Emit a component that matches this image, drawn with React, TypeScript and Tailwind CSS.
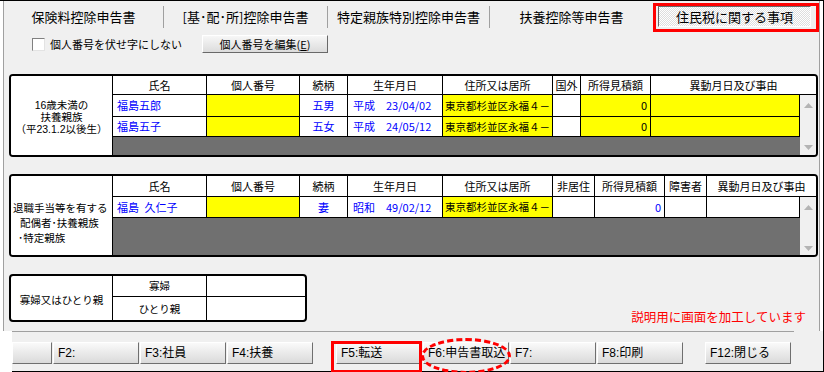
import React from 'react';

type Cell = { t?: React.ReactNode; w: string; bg?: string; cls?: string };

const jp = "font-['Noto_Sans_CJK_JP',sans-serif]";
const btnFont = "font-['Liberation_Sans','Noto_Sans_CJK_JP',sans-serif]";
const blue = 'text-[#0000ff]';

const Up = () => (
  <svg width="9" height="5" viewBox="0 0 9 5">
    <path d="M4.5 0L9 5H0z" fill="#b4b4b4" />
  </svg>
);
const Down = () => (
  <svg width="9" height="5" viewBox="0 0 9 5">
    <path d="M0 0H9L4.5 5z" fill="#b4b4b4" />
  </svg>
);

function Row({ cells, h }: { cells: Cell[]; h: string }) {
  return (
    <div className={`flex ${h} border-b border-black shrink-0`}>
      {cells.map((c, i) => (
        <div
          key={i}
          className={`${c.w} shrink-0 h-full border-r border-black flex items-center whitespace-nowrap overflow-hidden ${c.bg ?? 'bg-white'} ${c.cls ?? ''}`}
        >
          {c.t}
        </div>
      ))}
    </div>
  );
}

function Header({ cols, h }: { cols: { h: string; w: string }[]; h: string }) {
  return (
    <div className={`flex ${h} border-b border-black bg-white shrink-0`}>
      {cols.map((c, i) =>
        i < cols.length - 1 ? (
          <div key={i} className={`${c.w} shrink-0 h-full border-r border-black flex items-center justify-center`}>
            {c.h}
          </div>
        ) : (
          <div key={i} className="flex-1 h-full flex items-center justify-center">
            {c.h}
          </div>
        )
      )}
    </div>
  );
}

const cols1 = [
  { h: '氏名', w: 'w-[94px]' },
  { h: '個人番号', w: 'w-[93px]' },
  { h: '続柄', w: 'w-[48px]' },
  { h: '生年月日', w: 'w-[95px]' },
  { h: '住所又は居所', w: 'w-[110px]' },
  { h: '国外', w: 'w-[28px]' },
  { h: '所得見積額', w: 'w-[70px]' },
  { h: '異動月日及び事由', w: 'w-[149px]' },
];

const cols2 = [
  { h: '氏名', w: 'w-[94px]' },
  { h: '個人番号', w: 'w-[93px]' },
  { h: '続柄', w: 'w-[48px]' },
  { h: '生年月日', w: 'w-[95px]' },
  { h: '住所又は居所', w: 'w-[110px]' },
  { h: '非居住', w: 'w-[42px]' },
  { h: '所得見積額', w: 'w-[70px]' },
  { h: '障害者', w: 'w-[42px]' },
  { h: '異動月日及び事由', w: 'w-[93px]' },
];

const yellow = 'bg-[#ffff00]';

function row1(name: string, rel: string, date: string): Cell[] {
  return [
    { t: name, w: 'w-[94px]', cls: `pl-[4px] ${blue}` },
    { w: 'w-[93px]', bg: yellow },
    { t: rel, w: 'w-[48px]', cls: `justify-center ${blue}` },
    { t: date, w: 'w-[95px]', cls: `pl-[5px] ${blue}` },
    { t: '東京都杉並区永福４－', w: 'w-[110px]', bg: yellow, cls: 'pl-[2px] text-[10.5px]' },
    { w: 'w-[28px]' },
    { t: '0', w: 'w-[70px]', bg: yellow, cls: 'justify-end pr-[3px]' },
    { w: 'w-[149px]', bg: yellow },
  ];
}

const row2: Cell[] = [
  { t: '福島\u2002久仁子', w: 'w-[94px]', cls: `pl-[4px] ${blue}` },
  { w: 'w-[93px]', bg: yellow },
  { t: '妻', w: 'w-[48px]', cls: `justify-center ${blue}` },
  { t: '昭和　49/02/12', w: 'w-[95px]', cls: `pl-[5px] ${blue}` },
  { t: '東京都杉並区永福４－', w: 'w-[110px]', bg: yellow, cls: 'pl-[2px] text-[10.5px]' },
  { w: 'w-[42px]' },
  { t: '0', w: 'w-[70px]', cls: `justify-end pr-[3px] ${blue}` },
  { w: 'w-[42px]' },
  { w: 'w-[93px]' },
];

const buttons = [
  { t: '', cls: 'w-[40px]' },
  { t: 'F2:', cls: 'w-[86px] ml-px' },
  { t: 'F3:社員', cls: 'w-[86px] ml-px' },
  { t: 'F4:扶養', cls: 'w-[86px] ml-px' },
  { t: 'F5:転送', cls: 'w-[86px] ml-[23px]' },
  { t: 'F6:申告書取込', cls: 'w-[86px] ml-px' },
  { t: 'F7:', cls: 'w-[86px] ml-px' },
  { t: 'F8:印刷', cls: 'w-[86px] ml-px' },
  { t: 'F12:閉じる', cls: 'w-[86px] ml-[22px]' },
];

export default function App() {
  return (
    <div className={`relative w-[824px] h-[372px] bg-white border-t border-r border-black overflow-hidden text-black ${jp}`}>
      {/* tab page */}
      <div className="ml-[3px] w-[817px] h-[330px] pt-[2px] border-l border-r border-[#a0a0a0] bg-[#f0f0f0] flex flex-col">
        {/* tabs */}
        <div className="flex items-center h-[28px] text-[13px] shrink-0">
          <div className="w-[160px] h-[22px] border-r border-[#a0a0a0] flex items-center justify-center">保険料控除申告書</div>
          <div className="w-[164px] h-[22px] border-r border-[#a0a0a0] flex items-center justify-center">[基･配･所]控除申告書</div>
          <div className="w-[162px] h-[22px] border-r border-[#a0a0a0] flex items-center justify-center">特定親族特別控除申告書</div>
          <div className="w-[163px] h-[22px] flex items-center justify-center">扶養控除等申告書</div>
          <div className="ml-[5px] self-start mt-[3px] w-[153px] h-[21px] border border-t-[#696969] border-l-[#696969] border-r-white border-b-white bg-[repeating-conic-gradient(#dedede_0_25%,#ffffff_0_50%)] bg-[length:2px_2px] flex items-center justify-center">
            住民税に関する事項
          </div>
        </div>

        {/* checkbox row */}
        <div className="flex items-center h-[18px] mt-[4px] text-[11px] shrink-0">
          <div className="ml-[28px] w-[13px] h-[13px] bg-white border border-t-[#808080] border-l-[#808080] border-r-[#e3e3e3] border-b-[#e3e3e3]" />
          <div className="ml-[5px] w-[152px]">個人番号を伏せ字にしない</div>
          <div className="w-[126px] h-[18px] border border-t-white border-l-white border-r-[#696969] border-b-[#696969] bg-gradient-to-b from-[#f7f7f7] to-[#dcdcdc] flex items-center justify-center">
            個人番号を編集(<span className="underline">E</span>)
          </div>
        </div>

        {/* table 1 */}
        <div className="ml-[5px] mt-[21px] w-[809px] h-[83px] border-2 border-black rounded-[4px] overflow-hidden flex shrink-0 text-[11px]">
          <div className="w-[101px] bg-white flex flex-col items-center justify-center font-['Liberation_Sans','Noto_Sans_CJK_JP',sans-serif] text-[10.5px] leading-[12px] pt-[3px]">
            <div>16歳未満の</div>
            <div>扶養親族</div>
            <div>（平23.1.2以後生）</div>
          </div>
          <div className="flex-1 border-l border-black flex flex-col">
            <Header cols={cols1} h="h-[19px]" />
            <div className="flex flex-1">
              <div className="w-[687px] flex flex-col">
                <Row cells={row1('福島五郎', '五男', '平成　23/04/02')} h="h-[22px]" />
                <Row cells={row1('福島五子', '五女', '平成　24/05/12')} h="h-[20px]" />
                <div className="flex-1 bg-[#707070]" />
              </div>
              <div className="flex-1 bg-[#f0f0f0] flex flex-col items-center justify-between pt-[8px] pb-[5px]">
                <Up />
                <Down />
              </div>
            </div>
          </div>
        </div>

        {/* table 2 */}
        <div className="ml-[5px] mt-[17px] w-[809px] h-[83px] border-2 border-black rounded-[4px] overflow-hidden flex shrink-0 text-[11px]">
          <div className="w-[101px] bg-white flex flex-col text-[10.5px] leading-[15px] pt-[24px]">
            <div className="pl-[2px]">退職手当等を有する</div>
            <div className="pl-[9px]">配偶者･扶養親族</div>
            <div className="pl-[7px]">･特定親族</div>
          </div>
          <div className="flex-1 border-l border-black flex flex-col">
            <Header cols={cols2} h="h-[21px]" />
            <div className="flex flex-1">
              <div className="w-[687px] flex flex-col">
                <Row cells={row2} h="h-[21px]" />
                <div className="flex-1 bg-[#707070]" />
              </div>
              <div className="flex-1 bg-[#f0f0f0] flex flex-col items-center justify-between pt-[8px] pb-[4px]">
                <Up />
                <Down />
              </div>
            </div>
          </div>
        </div>

        {/* table 3 + note */}
        <div className="flex items-end mt-[17px] shrink-0">
          <div className="ml-[5px] w-[298px] h-[48px] border-2 border-black rounded-[4px] overflow-hidden flex bg-white text-[10.5px]">
            <div className="w-[102px] border-r border-black flex items-center justify-center pt-[4px]">寡婦又はひとり親</div>
            <div className="w-[94px] border-r border-black flex flex-col">
              <div className="h-[21px] border-b border-black flex items-center justify-center">寡婦</div>
              <div className="flex-1 flex items-center justify-center">ひとり親</div>
            </div>
            <div className="flex-1 flex flex-col">
              <div className="h-[21px] border-b border-black" />
              <div className="flex-1" />
            </div>
          </div>
          <div className="ml-auto mr-[13px] mb-[-3px] text-[12.5px] leading-[16px] text-[#ff0000]">説明用に画面を加工しています</div>
        </div>
      </div>

      {/* function key bar */}
      <div className={`ml-[12px] h-[41px] bg-[#f0f0f0] border-b border-black ${btnFont}`}>
        <div className="w-[782px] h-px bg-[#a0a0a0]" />
        <div className="flex mt-[10px] h-[22px] text-[12px]">
          {buttons.map((b, i) => (
            <div
              key={i}
              className={`${b.cls} h-full shrink-0 border border-t-white border-l-white border-r-[#6f6f6f] border-b-[#6f6f6f] bg-gradient-to-b from-[#fafafa] to-[#dadada] flex items-center pl-[4px] whitespace-nowrap`}
            >
              {b.t}
            </div>
          ))}
        </div>
      </div>

      {/* annotations */}
      <div className="absolute left-[653px] top-[2px] w-[166px] h-[29px] border-[3px] border-[#ff0000]" />
      <div className="absolute left-[331px] top-[340px] w-[91px] h-[32px] border-[3px] border-[#ff0000]" />
      <div className="absolute left-[421px] top-[337px] w-[90px] h-[36px] rounded-[50%] border-[3px] border-dashed border-[#ff0000]" />
    </div>
  );
}
